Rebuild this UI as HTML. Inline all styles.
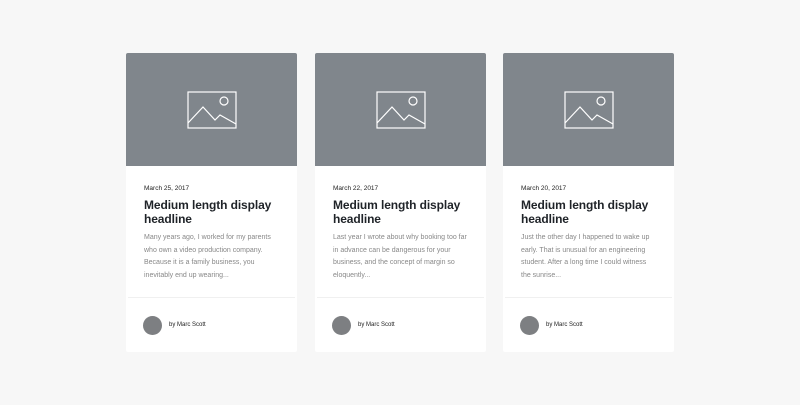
<!DOCTYPE html>
<html><head><style>
body{margin:0;width:800px;height:405px;background:#f7f7f7;font-family:"Liberation Sans",sans-serif;position:relative;overflow:hidden}
.card{position:absolute;top:53px;width:171px;height:299px;background:#fff;border-radius:2px}
.img{height:113px;background:#80868c;border-radius:2px 2px 0 0;position:relative}
.img svg{position:absolute;left:61px;top:38px}
.date{position:absolute;left:18px;top:132px;font-size:6.5px;color:#222}
.h{position:absolute;left:18px;top:145px;font-size:12px;font-weight:bold;color:#1f2328;line-height:14px;letter-spacing:-0.1px}
.p{position:absolute;left:18px;top:179px;width:135px;font-size:7px;line-height:12.6px;color:#888}
.div{position:absolute;left:2px;right:2px;top:244px;border-top:1px solid #f0f0f0}
.av{position:absolute;left:17px;top:263px;width:19px;height:19px;border-radius:50%;background:#7d7f82}
.by{position:absolute;left:43px;top:269px;font-size:6px;color:#222}
</style></head><body>
<div class="card" style="left:126px">
<div class="img"><svg width="50" height="38" viewBox="0 0 50 38" fill="none" stroke="#fff" stroke-width="1.2"><rect x="1" y="1" width="48" height="36"/><circle cx="37" cy="10" r="4"/><path d="M1 32 L16 16 L28 29 L33 24 L49 33"/></svg></div>
<div class="date">March 25, 2017</div>
<div class="h">Medium length display<br>headline</div>
<div class="p">Many years ago, I worked for my parents who own a video production company. Because it is a family business, you inevitably end up wearing...</div>
<div class="div"></div><div class="av"></div><div class="by">by Marc Scott</div>
</div>
<div class="card" style="left:315px">
<div class="img"><svg width="50" height="38" viewBox="0 0 50 38" fill="none" stroke="#fff" stroke-width="1.2"><rect x="1" y="1" width="48" height="36"/><circle cx="37" cy="10" r="4"/><path d="M1 32 L16 16 L28 29 L33 24 L49 33"/></svg></div>
<div class="date">March 22, 2017</div>
<div class="h">Medium length display<br>headline</div>
<div class="p">Last year I wrote about why booking too far in advance can be dangerous for your business, and the concept of margin so eloquently...</div>
<div class="div"></div><div class="av"></div><div class="by">by Marc Scott</div>
</div>
<div class="card" style="left:503px">
<div class="img"><svg width="50" height="38" viewBox="0 0 50 38" fill="none" stroke="#fff" stroke-width="1.2"><rect x="1" y="1" width="48" height="36"/><circle cx="37" cy="10" r="4"/><path d="M1 32 L16 16 L28 29 L33 24 L49 33"/></svg></div>
<div class="date">March 20, 2017</div>
<div class="h">Medium length display<br>headline</div>
<div class="p">Just the other day I happened to wake up early. That is unusual for an engineering student. After a long time I could witness the sunrise...</div>
<div class="div"></div><div class="av"></div><div class="by">by Marc Scott</div>
</div>
</body></html>
